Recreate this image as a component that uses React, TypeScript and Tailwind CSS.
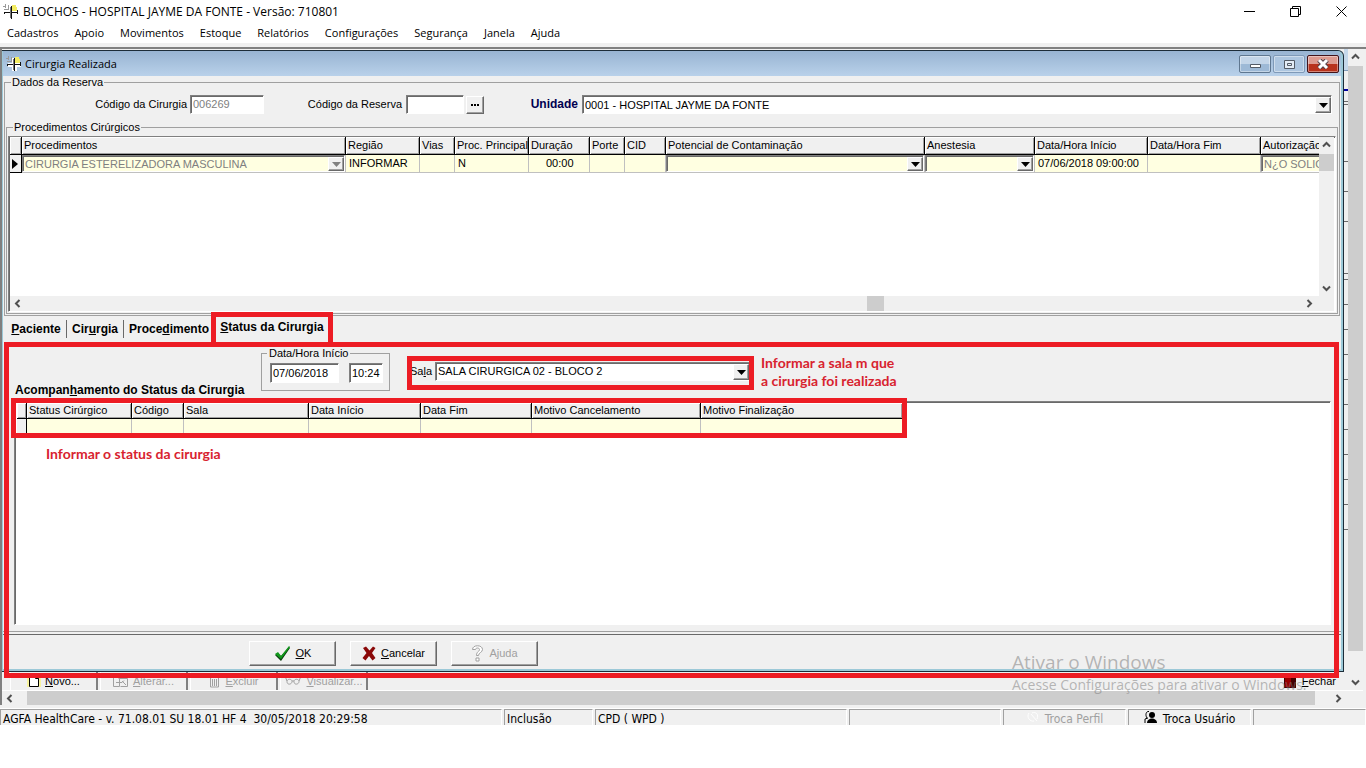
import React from "react";

const sunken =
	"border border-t-[#808080] border-l-[#808080] border-r-white border-b-white shadow-[inset_1px_1px_0_#696969]";
const raised =
	"border border-t-white border-l-white border-r-[#696969] border-b-[#696969] shadow-[inset_-1px_-1px_0_#a0a0a0] bg-[#f0f0f0]";

const AppIcon = () => (
	<svg width="16" height="16" viewBox="0 0 16 16" shapeRendering="crispEdges">
		<path d="M6 2h5v5h4v4h-4v4H6v-4H2V7h4z" fill="#fff" />
		<path d="M9 1h4v2h1v4H9z" fill="#f3ec62" />
		<path d="M0 2.500h3M2.500 0v4M5.500 1v5M1 5.500h5" stroke="#9a9a9a" fill="none" />
		<path d="M1 8.500h14M8.500 2v13M14.500 6v4M1.500 8v2" stroke="#111" fill="none" />
		<path d="M7.500 3v11" stroke="#777" fill="none" />
	</svg>
);

const Chevron = ({ d }: { d: string }) => (
	<svg width="15" height="15" viewBox="0 0 15 15">
		<path d={d} fill="none" stroke="#505050" strokeWidth="2" />
	</svg>
);
const UP = "M4 9.5l3.5-3.5L11 9.5";
const DOWN = "M4 5.5L7.500 9L11 5.500";
const LEFT = "M9.500 4L6 7.500L9.500 11";
const RIGHT = "M5.500 4L9 7.500L5.500 11";

type ComboProps = {
	label: string;
	id?: string;
	value?: string;
	className?: string;
	disabled?: boolean;
};

const Combo = ({ label, id, value = "", className = "", disabled }: ComboProps) => (
	<div className={`relative flex ${sunken} ${className}`}>
		<select
			id={id}
			aria-label={label}
			disabled={disabled}
			className={`w-full appearance-none bg-transparent pl-[2px] pr-5 outline-none ${
				disabled ? "text-[#808080] opacity-100" : "text-black"
			}`}
		>
			<option>{value}</option>
		</select>
		<span
			className={`pointer-events-none absolute top-px right-0 bottom-0 flex w-4 items-center justify-center ${raised}`}
		>
			<svg width="9" height="5" viewBox="0 0 9 5">
				<path d="M0 0h9L4.500 5z" fill={disabled ? "#808080" : "#000"} />
			</svg>
		</span>
	</div>
);

const Menu = [
	"Cadastros",
	"Apoio",
	"Movimentos",
	"Estoque",
	"Relatórios",
	"Configurações",
	"Segurança",
	"Janela",
	"Ajuda",
];

const TitleBar = () => (
	<header className="bg-white font-['Open_Sans',sans-serif] text-[11px]">
		<div className="flex h-[23px] items-center pr-[2px] pl-[3px]">
			<AppIcon />
			<h1 className="ml-1 flex-1 text-[12px]">
				BLOCHOS - HOSPITAL JAYME DA FONTE - Versão: 710801
			</h1>
			<div className="flex">
				<button aria-label="Minimizar" className="flex w-[46px] justify-center">
					<svg width="11" height="11" viewBox="0 0 11 11">
						<path d="M0 5.500h11" stroke="#000" />
					</svg>
				</button>
				<button aria-label="Restaurar" className="flex w-[46px] justify-center">
					<svg width="11" height="11" viewBox="0 0 11 11">
						<path
							d="M.5 2.500h8v8h-8zM2.500 2.500v-2h8v8h-2"
							fill="none"
							stroke="#000"
						/>
					</svg>
				</button>
				<button aria-label="Fechar" className="flex w-[46px] justify-center">
					<svg width="11" height="11" viewBox="0 0 11 11">
						<path d="M.5.5l10 10M10.500.5l-10 10" stroke="#000" />
					</svg>
				</button>
			</div>
		</div>
		<nav className="flex h-5 items-center gap-4 pl-[7px]">
			{Menu.map((menu) => (
				<button key={menu}>{menu}</button>
			))}
		</nav>
	</header>
);

const captionButton =
	"flex h-[18px] w-8 items-center justify-center rounded-[2px] border shadow-[inset_0_0_0_1px_#ffffff66]";

const ChildTitle = () => (
	<div className="flex h-[25px] shrink-0 items-center rounded-tr-md bg-linear-to-b from-[#98b4d2] to-[#b9d1ea] pt-px pl-[3px]">
		<AppIcon />
		<h2 className="ml-[3px] flex-1 font-['Open_Sans',sans-serif] text-[11px]">
			Cirurgia Realizada
		</h2>
		<div className="flex gap-[2px] pr-[2px]">
			<button
				aria-label="Minimizar janela"
				className={`${captionButton} border-[#5f7790] bg-linear-to-b from-[#c3d5e8] from-50% to-[#9db9d6] to-50%`}
			>
				<svg width="11" height="9" viewBox="0 0 11 9">
					<path d="M.5 4.500h10v3H.5z" fill="#fff" stroke="#535b66" />
				</svg>
			</button>
			<button
				aria-label="Maximizar janela"
				className={`${captionButton} border-[#7f9ab8] bg-[#adc6e0]`}
			>
				<svg width="11" height="9" viewBox="0 0 11 9">
					<path
						d="M.5.5h10v8H.5zM3.500 3.500h4v2h-4z"
						fill="#e4edf6"
						stroke="#535b66"
					/>
				</svg>
			</button>
			<button
				aria-label="Fechar janela"
				className={`${captionButton} border-[#43141a] bg-linear-to-b from-[#dd9a8f] from-50% to-[#b8321c] to-50%`}
			>
				<svg width="12" height="10" viewBox="0 0 12 10">
					<path d="M2 1l8 8M10 1L2 9" stroke="#53434a" strokeWidth="5" />
					<path d="M2 1l8 8M10 1L2 9" stroke="#fff" strokeWidth="3" />
				</svg>
			</button>
		</div>
	</div>
);

const th =
	"border-r border-b border-black bg-[#f0f0f0] p-0 pl-[2px] text-left font-normal whitespace-nowrap shadow-[inset_1px_1px_0_#fff,inset_-1px_-1px_0_#a0a0a0]";
const td =
	"border-r border-b border-[#c0c0c0] bg-[#ffffe1] p-0 whitespace-nowrap";

const procedureColumns = [
	{ name: "Procedimentos", width: "w-[324px]" },
	{ name: "Região", width: "w-[74px]" },
	{ name: "Vias", width: "w-[35px]" },
	{ name: "Proc. Principal", width: "w-[74px]" },
	{ name: "Duração", width: "w-[61px]" },
	{ name: "Porte", width: "w-[35px]" },
	{ name: "CID", width: "w-[41px]" },
	{ name: "Potencial de Contaminação", width: "w-[259px]" },
	{ name: "Anestesia", width: "w-[110px]" },
	{ name: "Data/Hora Início", width: "w-[113px]" },
	{ name: "Data/Hora Fim", width: "w-[113px]" },
	{ name: "Autorização", width: "w-[120px]" },
];

const ProcedureGrid = () => (
	<div className={`flex h-[176px] flex-col bg-white pr-px pl-px ${sunken}`}>
		<div className="flex min-h-0 flex-1">
			<div className="min-w-0 flex-1 overflow-hidden">
				<table className="w-[1371px] table-fixed border-separate border-spacing-0">
					<thead>
						<tr className="h-[18px]">
							<th className={`w-3 ${th}`} />
							{procedureColumns.map((col) => (
								<th key={col.name} className={`${col.width} ${th}`}>
									{col.name}
								</th>
							))}
						</tr>
					</thead>
					<tbody>
						<tr className="h-[18px]">
							<td className="border-r border-b border-black bg-[#f0f0f0] p-0">
								<svg width="7" height="10" viewBox="0 0 7 10" className="ml-[2px]">
									<path d="M0 0l6 5-6 5z" />
								</svg>
							</td>
							<td className={td}>
								<Combo
									label="Procedimento"
									value="CIRURGIA ESTERELIZADORA MASCULINA"
									className="h-[17px] bg-[#ffffe1]"
									disabled
								/>
							</td>
							<td className={`${td} pl-[3px]`}>INFORMAR</td>
							<td className={td} />
							<td className={`${td} pl-[3px]`}>N</td>
							<td className={`${td} pl-[17px]`}>00:00</td>
							<td className={td} />
							<td className={td} />
							<td className={td}>
								<Combo
									label="Potencial de Contaminação"
									className="h-[17px] bg-[#ffffe1]"
								/>
							</td>
							<td className={td}>
								<Combo label="Anestesia" className="h-[17px] bg-[#ffffe1]" />
							</td>
							<td className={`${td} pl-[3px]`}>07/06/2018 09:00:00</td>
							<td className={td} />
							<td className={td}>
								<Combo
									label="Autorização"
									value="N¿O SOLICITADO"
									className="h-[17px] bg-[#ffffe1]"
									disabled
								/>
							</td>
						</tr>
					</tbody>
				</table>
			</div>
			<div className="flex w-[15px] flex-col bg-[#f0f0f0]">
				<Chevron d={UP} />
				<div className="mt-[2px] h-[17px] bg-[#cdcdcd]" />
				<div className="flex-1" />
				<Chevron d={DOWN} />
			</div>
		</div>
		<div className="flex h-[15px] bg-[#f0f0f0]">
			<Chevron d={LEFT} />
			<div className="flex-[848]" />
			<div className="w-[17px] bg-[#cdcdcd]" />
			<div className="flex-[421]" />
			<Chevron d={RIGHT} />
			<div className="w-[17px]" />
		</div>
	</div>
);

const ReservationData = () => (
	<fieldset className="mx-px min-w-0 border border-[#a0a0a0] px-px pb-px">
		<legend className="ml-[5px] px-px leading-[13px]">Dados da Reserva</legend>
		<div className="mt-[6px] flex h-[19px] items-stretch leading-[19px]">
			<label htmlFor="cirurgia" className="w-[181px] text-right">
				Código da Cirurgia
			</label>
			<input
				id="cirurgia"
				readOnly
				defaultValue="006269"
				className={`ml-[3px] w-[74px] bg-white pl-[2px] text-[#808080] ${sunken}`}
			/>
			<label htmlFor="reserva" className="w-[138px] text-right">
				Código da Reserva
			</label>
			<input id="reserva" className={`ml-1 w-[58px] bg-white ${sunken}`} />
			<button
				aria-label="Buscar reserva"
				className={`mt-px ml-[2px] flex w-[18px] items-center justify-center ${raised}`}
			>
				<svg width="8" height="2" viewBox="0 0 8 2">
					<path d="M0 0h2v2H0zM3 0h2v2H3zM6 0h2v2H6z" />
				</svg>
			</button>
			<label
				htmlFor="unidade"
				className="w-[94px] text-right text-[12px] font-bold text-[#000050]"
			>
				Unidade
			</label>
			<Combo
				id="unidade"
				label="Unidade"
				value="0001 - HOSPITAL JAYME DA FONTE"
				className="mr-[6px] ml-1 flex-1 bg-white"
			/>
		</div>
		<fieldset className="mt-[7px] min-w-0 border border-[#a0a0a0] px-px pt-[2px] pb-px">
			<legend className="ml-[5px] px-px leading-[13px]">
				Procedimentos Cirúrgicos
			</legend>
			<ProcedureGrid />
		</fieldset>
	</fieldset>
);

const Tabs = () => (
	<div
		role="tablist"
		className="flex h-[26px] shrink-0 items-stretch pl-[3px] text-[12px] font-bold"
	>
		<button role="tab" className="my-1 w-[61px] border-r border-[#696969]">
			<u>P</u>aciente
		</button>
		<button role="tab" className="my-1 w-[57px] border-r border-[#696969]">
			Cir<u>u</u>rgia
		</button>
		<button role="tab" className="my-1 w-[90px]">
			Proce<u>d</u>imento
		</button>
		<button role="tab" aria-selected className="relative w-[116px] pb-1">
			<u>S</u>tatus da Cirurgia
			<span className="pointer-events-none absolute -inset-x-[3px] -top-1 -bottom-[5px] border-[5px] border-[#ed1c24]" />
		</button>
	</div>
);

const statusColumns = [
	{ name: "Status Cirúrgico", width: "w-[105px]" },
	{ name: "Código", width: "w-[52px]" },
	{ name: "Sala", width: "w-[125px]" },
	{ name: "Data Início", width: "w-[112px]" },
	{ name: "Data Fim", width: "w-[111px]" },
	{ name: "Motivo Cancelamento", width: "w-[169px]" },
	{ name: "Motivo Finalização", width: "w-[202px]" },
];

const StatusGrid = () => (
	<div
		className={`mr-[10px] ml-[11px] min-h-0 flex-1 bg-white pt-px pl-[2px] ${sunken}`}
	>
		<div className="relative w-fit">
			<table className="w-[886px] table-fixed border-separate border-spacing-0">
				<thead>
					<tr className="h-4 leading-[15px]">
						<th className={`w-[10px] ${th}`} />
						{statusColumns.map((col) => (
							<th key={col.name} className={`${col.width} ${th}`}>
								{col.name}
							</th>
						))}
					</tr>
				</thead>
				<tbody>
					<tr className="h-[15px]">
						<td className="border-r border-black bg-[#f0f0f0] p-0" />
						{statusColumns.map((col) => (
							<td key={col.name} className={td} />
						))}
					</tr>
				</tbody>
			</table>
			<div className="pointer-events-none absolute -top-[5px] -right-1 -bottom-1 -left-[6px] border-[5px] border-[#ed1c24]" />
		</div>
		<p className="mt-[11px] ml-[29px] font-['Lato',sans-serif] text-[14px] leading-[18px] font-bold text-[#d8232f]">
			Informar o status da cirurgia
		</p>
	</div>
);

const dialogButton = `flex h-[25px] w-[87px] items-center justify-center gap-[5px] ${raised}`;

const StatusPanel = () => (
	<section className="relative flex min-h-0 flex-1 flex-col">
		<div className="flex h-[59px] shrink-0 items-start">
			<h3 className="w-[258px] self-end pb-1 pl-3 text-[12px] leading-[14px] font-bold whitespace-nowrap">
				Acompan<u>h</u>amento do Status da Cirurgia
			</h3>
			<fieldset className="mt-[5px] w-[129px] border border-[#a0a0a0] pb-[7px] pl-2">
				<legend className="-ml-[3px] px-[2px] leading-[13px]">
					Data/Hora Início
				</legend>
				<div className="mt-[3px] flex gap-[10px]">
					<input
						aria-label="Data"
						defaultValue="07/06/2018"
						className={`h-5 w-[69px] bg-white pl-[2px] ${sunken}`}
					/>
					<input
						aria-label="Hora"
						defaultValue="10:24"
						className={`h-5 w-[34px] bg-white pl-[2px] ${sunken}`}
					/>
				</div>
			</fieldset>
			<div className="relative mt-[14px] ml-[17px] flex h-[34px] w-[347px] pt-[6px] pr-1 pl-[3px]">
				<label htmlFor="sala" className="w-[25px] leading-[18px]">
					Sa<u>l</u>a
				</label>
				<Combo
					id="sala"
					label="Sala"
					value="SALA CIRURGICA 02 - BLOCO 2"
					className="h-[19px] flex-1 bg-white"
				/>
				<div className="pointer-events-none absolute inset-0 border-[5px] border-[#ed1c24]" />
			</div>
			<p className="mt-3 ml-[7px] font-['Lato',sans-serif] text-[14px] leading-[18px] font-bold text-[#d8232f]">
				Informar a sala m que
				<br />a cirurgia foi realizada
			</p>
		</div>
		<StatusGrid />
		<div className="mt-[6px] h-1 shrink-0 border-t border-b border-t-[#a0a0a0] border-b-[#696969]" />
		<div className="flex h-[34px] shrink-0 gap-[14px] pt-[6px] pl-[246px]">
			<button className={dialogButton}>
				<svg width="17" height="15" viewBox="0 0 17 15">
					<path d="M1 9l3-2 3 3 8-9 1 1-9 13z" fill="#0b3d10" />
					<path d="M1 8l3-2 3 4 8-10 1 1-9 12z" fill="#119a1c" />
				</svg>
				<span>
					<u>O</u>K
				</span>
			</button>
			<button className={dialogButton}>
				<svg width="14" height="15" viewBox="0 0 14 15">
					<path
						d="M1 2l3-1.500 3.500 4L11 .5l2.500 1.500L10 7l3.500 5-3 2.500L7 10l-3.500 4.500L.5 12 4.500 7z"
						fill="#8a0808"
					/>
				</svg>
				<span>
					<u>C</u>ancelar
				</span>
			</button>
			<button disabled className={`${dialogButton} text-[#a0a0a0]`}>
				<svg width="13" height="17" viewBox="0 0 13 17">
					<path
						d="M1.500 4.500c0-5 10-5 10 0 0 3-4 3-4 6h-2c0-4 3-4 3-6 0-2-4-2-4 0zM5 13h3v3H5z"
						fill="#fff"
						stroke="#a0a0a0"
					/>
				</svg>
				<span>Ajuda</span>
			</button>
		</div>
		<div className="pointer-events-none absolute top-0 right-[2px] -bottom-[9px] left-px z-10 border-[5px] border-[#ed1c24]" />
	</section>
);

const toolButton =
	"flex w-[88px] items-center justify-center gap-1 border-l border-r-2 border-l-white border-r-[#808080]";

const Toolbar = () => (
	<div className="ml-2 flex h-[18px] shrink-0 gap-[2px] overflow-hidden leading-4">
		<button className={toolButton}>
			<svg width="14" height="14" viewBox="0 0 14 14">
				<path d="M0 3h14v10H0z" fill="#f7f3a0" />
				<path d="M2.500 1.500h6l3 3v8h-9zM8.500 1.500v3h3" fill="#fff" stroke="#000" />
			</svg>
			<span>
				<u>N</u>ovo...
			</span>
		</button>
		<button disabled className={`${toolButton} text-[#a0a0a0]`}>
			<svg width="16" height="14" viewBox="0 0 16 14">
				<path
					d="M.5 1.500h6v11h-6zM3 8.500h6l2-2M5.500 4.500h9v8h-7M9 7l4 4"
					fill="none"
					stroke="#a0a0a0"
				/>
			</svg>
			<span>
				<u>A</u>lterar...
			</span>
		</button>
		<button disabled className={`${toolButton} text-[#a0a0a0]`}>
			<svg width="13" height="14" viewBox="0 0 13 14">
				<path
					d="M0 3.500h13M2.500 4v9h8V4M4.500 5v7M6.500 5v7M8.500 5v7M4.500 1.500h4"
					fill="none"
					stroke="#a0a0a0"
				/>
			</svg>
			<span>
				<u>E</u>xcluir
			</span>
		</button>
		<button disabled className={`${toolButton} text-[#a0a0a0]`}>
			<svg width="18" height="14" viewBox="0 0 18 14">
				<path
					d="M1 2l2 5M17 2l-2 5M3 7.500c0-3 5-3 5 0s-5 4-5 0M10 7.500c0-3 5-3 5 0s-5 4-5 0M8 7h2"
					fill="none"
					stroke="#a0a0a0"
				/>
			</svg>
			<span>
				<u>V</u>isualizar...
			</span>
		</button>
		<div className="flex-1" />
		<button className="flex items-center gap-[6px] pr-3">
			<svg width="12" height="14" viewBox="0 0 12 14">
				<path d="M0 0h12v14H0z" fill="#400" />
				<path d="M1 2h6v11H1z" fill="#900" />
			</svg>
			<span>
				<u>F</u>echar
			</span>
		</button>
	</div>
);

// slice of the maximized window that stays visible behind the dialog
const tickGaps = [
	"h-[57px]",
	"h-[30px]",
	"h-[30px]",
	"h-[52px]",
	"h-[6px]",
	"h-[25px]",
	"h-[25px]",
	"h-[25px]",
	"h-[25px]",
	"h-[25px]",
	"h-[25px]",
	"h-[25px]",
	"h-[25px]",
	"h-[25px]",
	"h-[25px]",
];

const BackgroundEdge = () => (
	<div className="w-1 bg-[#f0f0f0]">
		<div className="h-[22px] border-b border-[#7f9ab8] bg-[#c5d8ea]" />
		<div className="mt-[18px] h-[2px] bg-[#0000a0]" />
		<div className="mt-[10px] h-1 border-t border-b border-[#696969]" />
		{tickGaps.map((gap, i) => (
			<div key={i} className={`${gap} border-b border-[#696969]`} />
		))}
	</div>
);

const panel =
	"flex items-start justify-center gap-[5px] border-t border-l border-[#a0a0a0] border-r border-r-white";

const StatusBar = () => (
	<footer className="flex h-4 gap-[2px] overflow-hidden bg-[#f0f0f0] font-['DejaVu_Sans_Condensed','DejaVu_Sans',sans-serif] text-[12px] leading-[18px] whitespace-pre">
		<div className={`${panel} flex-1 justify-start pl-[2px]`}>
			AGFA HealthCare - v. 71.08.01 SU 18.01 HF 4{"  "}30/05/2018 20:29:58
		</div>
		<div className={`${panel} w-[89px] justify-start pl-[2px]`}>Inclusão</div>
		<div className={`${panel} w-[252px] justify-start pl-[2px]`}>
			CPD ( WPD )
		</div>
		<div className={`${panel} w-[152px]`} />
		<button disabled className={`${panel} w-[123px] text-[#a0a0a0]`}>
			<svg width="14" height="14" viewBox="0 0 14 14">
				<path d="M3 3c-3 4 1 9 5 8M5 4l6 7M6 3c4-2 7 2 5 6" stroke="#fff" fill="none" />
			</svg>
			Troca Perfil
		</button>
		<button className={`${panel} w-[123px]`}>
			<svg width="14" height="14" viewBox="0 0 14 14">
				<path
					d="M3 8C1 5 2 1 5 1.500M1 13V9l3-1"
					fill="none"
					stroke="#000"
				/>
				<circle cx="8" cy="5" r="3" />
				<path d="M3 13c0-6 10-6 10 0z" />
			</svg>
			Troca Usuário
		</button>
		<div className={`${panel} w-[113px]`} />
	</footer>
);

export default function App() {
	return (
		<div className="relative flex h-screen flex-col bg-white pb-[43px] font-['Liberation_Sans',Arial,sans-serif] text-[11px] text-black">
			<TitleBar />
			<div className="h-1 shrink-0 bg-[#f0f0f0]" />
			<main className="flex min-h-0 flex-1 flex-col border-t-2 border-l-2 border-[#808080] bg-[#f0f0f0] pr-[3px]">
				<div className="flex min-h-0 flex-1">
					<div className="flex min-w-0 flex-1 flex-col">
						<div className="flex min-h-0 flex-1">
							<div className="mt-px flex min-w-0 flex-1 flex-col rounded-tr-md border border-l-0 border-[#1c2c38] bg-[#9cc9d8] pr-[2px] pb-[2px] pl-px">
								<ChildTitle />
								<div className="flex min-h-0 flex-1 flex-col bg-[#f0f0f0]">
									<ReservationData />
									<Tabs />
									<StatusPanel />
								</div>
							</div>
							<BackgroundEdge />
						</div>
						<Toolbar />
					</div>
					<div className="flex w-[15px] flex-col">
						<Chevron d={UP} />
						<div className="mt-[2px] flex-1 bg-[#cdcdcd]" />
						<div className="h-6" />
						<Chevron d={DOWN} />
					</div>
				</div>
				<div className="flex h-[15px] border-t border-white">
					<Chevron d={LEFT} />
					<div className="ml-[10px] flex-1 bg-[#cdcdcd]" />
					<div className="w-4" />
					<Chevron d={RIGHT} />
					<div className="w-[17px]" />
				</div>
			</main>
			<div className="h-1 shrink-0 border-b border-white bg-[#f0f0f0]" />
			<StatusBar />
			<div className="pointer-events-none absolute right-[56px] bottom-[73px] z-20 w-[298px] font-['Open_Sans',sans-serif] whitespace-nowrap text-[#8080808c]">
				<p className="text-[19px] leading-[25px]">Ativar o Windows</p>
				<p className="text-[14px] leading-[20px]">
					Acesse Configurações para ativar o Windows.
				</p>
			</div>
		</div>
	);
}
